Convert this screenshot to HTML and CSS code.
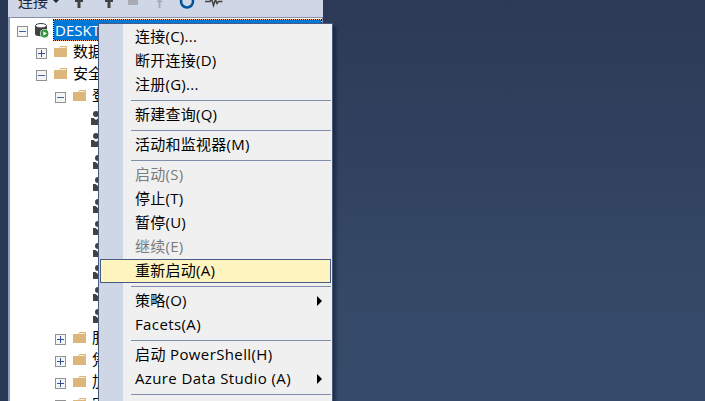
FILE: index.html
```html
<!DOCTYPE html>
<html lang="zh-CN">
<head>
<meta charset="utf-8">
<title>对象资源管理器</title>
<link rel="stylesheet" href="styles.css">
</head>
<body>
<svg width="0" height="0" class="defs">
  <symbol id="minus" viewBox="0 0 11 11"><rect x=".5" y=".5" width="10" height="10" fill="#f5f5f5" stroke="#919191"/><path d="M2 5.5h7" stroke="#4060a5"/></symbol>
  <symbol id="plus" viewBox="0 0 11 11"><rect x=".5" y=".5" width="10" height="10" fill="#f5f5f5" stroke="#919191"/><path d="M2 5.5h7M5.500 2v7" stroke="#324f9a"/></symbol>
  <symbol id="folder" viewBox="0 0 14 12"><path d="M0 2h5l1.500-2H13v11H0z" fill="#dcb67a"/><path d="M6 1.500h6" stroke="#f7eddc"/></symbol>
  <symbol id="user" viewBox="0 0 14 14"><circle cx="5" cy="3" r="3" fill="#424242"/><path d="M0 7h2.500L5 9l2.500-2H10v7H0z" fill="#424242"/></symbol>
</svg>
<div class="window">
  <aside class="explorer">
    <div class="toolbar">
      <span class="connect">连接</span>
      <svg class="tools" width="175" height="17" viewBox="0 0 175 17">
        <path d="M2 0h6L5 3z" fill="#1b293e"/>
        <path d="M24 0h8v2h-2.500v6h-3V2H24z" fill="#424242"/>
        <path d="M54 0h8v2h-2.500v6h-3V2H54z" fill="#424242"/>
        <path d="M77 0h10v5H77z" fill="#a9acb5"/>
        <path d="M105 2 108.500-1l3.500 3h-2.500v6h-2V2z" fill="#a9acb5"/>
        <circle cx="136" cy="1.500" r="6" fill="none" stroke="#00539c" stroke-width="2.500"/>
        <path d="M154 1.500h5l1.500-3 2 7 2-6 1.500 4 1.500-2h4" fill="none" stroke="#424242" stroke-width="1.500"/>
      </svg>
    </div>
    <div class="tree">
      <div class="row root"><svg class="box"><use href="#minus"/></svg>
        <svg class="db" viewBox="0 0 14 15"><path d="M0 3v8c0 3 10 3 12 0V3z" fill="#424242"/><ellipse cx="6" cy="2.700" rx="5.500" ry="2.200" fill="#fff" stroke="#424242"/><circle cx="9.500" cy="10.500" r="4.500" fill="#fff"/><circle cx="9.500" cy="10.500" r="3.900" fill="#2f9638"/><path d="M8.300 8.200v4.600l3.700-2.300z" fill="#fff"/></svg>
        <span class="selected">DESKTOP</span></div>
      <div class="row l1"><svg class="box"><use href="#plus"/></svg><svg class="folder"><use href="#folder"/></svg><span>数据库</span></div>
      <div class="row l1"><svg class="box"><use href="#minus"/></svg><svg class="folder"><use href="#folder"/></svg><span>安全性</span></div>
      <div class="row l2"><svg class="box"><use href="#minus"/></svg><svg class="folder"><use href="#folder"/></svg><span>登录名</span></div>
      <div class="row login group"><svg class="user"><use href="#user"/></svg></div>
      <div class="row login group"><svg class="user"><use href="#user"/></svg></div>
      <div class="row login"><svg class="user"><use href="#user"/></svg></div>
      <div class="row login"><svg class="user"><use href="#user"/></svg></div>
      <div class="row login"><svg class="user"><use href="#user"/></svg></div>
      <div class="row login"><svg class="user"><use href="#user"/></svg></div>
      <div class="row login"><svg class="user"><use href="#user"/></svg></div>
      <div class="row login"><svg class="user"><use href="#user"/></svg></div>
      <div class="row login"><svg class="user"><use href="#user"/></svg></div>
      <div class="row login"><svg class="user"><use href="#user"/></svg></div>
      <div class="row l2"><svg class="box"><use href="#plus"/></svg><svg class="folder"><use href="#folder"/></svg><span>服务器角色</span></div>
      <div class="row l2"><svg class="box"><use href="#plus"/></svg><svg class="folder"><use href="#folder"/></svg><span>凭据</span></div>
      <div class="row l2"><svg class="box"><use href="#plus"/></svg><svg class="folder"><use href="#folder"/></svg><span>加密提供程序</span></div>
      <div class="row l2"><svg class="box"><use href="#plus"/></svg><svg class="folder"><use href="#folder"/></svg><span>审核</span></div>
    </div>
  </aside>
  <div class="menu">
    <div class="item">连接(C)...</div>
    <div class="item">断开连接(D)</div>
    <div class="item">注册(G)...</div>
    <div class="sep"></div>
    <div class="item">新建查询(Q)</div>
    <div class="sep"></div>
    <div class="item">活动和监视器(M)</div>
    <div class="sep"></div>
    <div class="item disabled">启动(S)</div>
    <div class="item">停止(T)</div>
    <div class="item">暂停(U)</div>
    <div class="item disabled">继续(E)</div>
    <div class="item active">重新启动(A)</div>
    <div class="sep"></div>
    <div class="item sub">策略(O)</div>
    <div class="item latin">Facets(A)</div>
    <div class="sep"></div>
    <div class="item latin">启动 PowerShell(H)</div>
    <div class="item latin sub">Azure Data Studio (A)</div>
    <div class="sep"></div>
  </div>
</div>
</body>
</html>
```
FILE: styles.css
```css
* { box-sizing: border-box; }
body { margin: 0; overflow: hidden; }
.defs { position: absolute; }
.window {
  position: relative;
  width: 705px;
  height: 401px;
  overflow: hidden;
  padding-left: 8px;
  background: linear-gradient(#2c3a56, #30415f 38%, #354967 72%, #364b6b);
  font: 15px/22px "Open Sans", "Noto Sans CJK SC", sans-serif;
  color: #000;
}
.window::before {
  content: "";
  position: absolute;
  left: 0;
  top: 0;
  width: 8px;
  height: 401px;
  background: #293955;
}
.explorer { width: 315px; height: 401px; display: flex; flex-direction: column; }
.toolbar {
  height: 17px;
  flex: none;
  display: flex;
  background: #cfd6e5;
  padding-left: 10px;
  overflow: hidden;
}
.connect { width: 33px; height: 22px; margin-top: -10px; color: #1b293e; }
.tools { flex: none; }
.tree {
  flex: 1;
  min-height: 0;
  overflow: hidden;
  background: #fff;
  border: 1px solid #8591a8;
  border-left: 2px solid #8e9bbc;
  border-bottom: 0;
  padding-top: 1px;
}
.row { height: 22px; display: flex; align-items: center; white-space: nowrap; }
.row > * { flex: none; }
.row > span { margin-top: -2px; }
.root { padding-left: 7px; }
.l1 { padding-left: 26px; }
.l2 { padding-left: 45px; }
.login { padding-left: 83px; }
.group { padding-left: 81px; }
.box { width: 11px; height: 11px; margin-top: 2px; }
.folder { width: 14px; height: 12px; margin: -1px 5px 0 7px; }
.db { width: 14px; height: 15px; margin: 0 4px 0 7px; }
.user { width: 14px; height: 14px; }
.row > .selected {
  width: 269px;
  height: 22px;
  margin-top: 0;
  line-height: 20px;
  padding-left: 1px;
  color: #fff;
  border: 1px dotted #1b1205;
  background: linear-gradient(#0078d7, #0078d7) padding-box, #ffb066 border-box;
}
.menu {
  position: absolute;
  left: 98px;
  top: 23px;
  width: 235px;
  height: 390px;
  padding: 1px;
  border: 1px solid #475b82;
  background: linear-gradient(90deg, #cfd6e5 24px, #f0f0f0 24px);
  box-shadow: 3px 3px 3px rgba(0, 0, 0, .35);
  letter-spacing: .25px;
}
.item { height: 24px; line-height: 20px; padding-left: 34px; border: 1px solid transparent; white-space: nowrap; }
.latin { letter-spacing: .38px; }
.disabled { color: #7b7b7b; }
.active { background: #fdf4bf; border-color: #475b82; }
.sub { display: flex; justify-content: space-between; padding-right: 8px; }
.sub::after { content: ""; height: 0; margin-top: 6px; border: 5px solid transparent; border-left-color: #000; border-right-width: 0; }
.sep { height: 6px; padding-top: 3px; margin-left: 31px; }
.sep::before { content: ""; display: block; height: 1px; background: #808fae; }
```
